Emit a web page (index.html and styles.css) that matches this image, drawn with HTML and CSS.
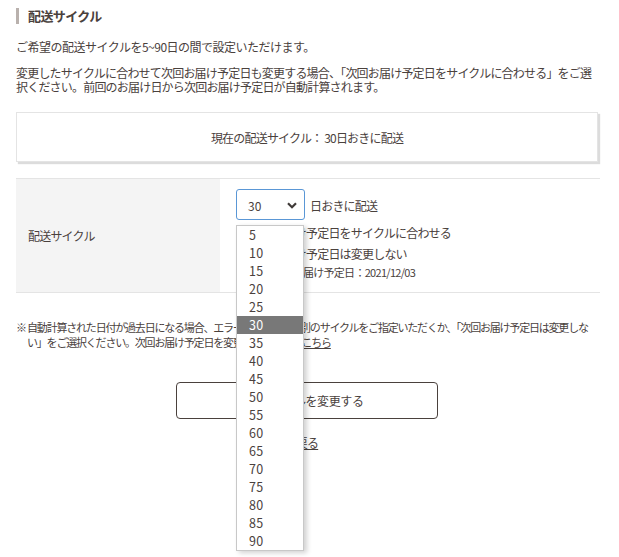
FILE: index.html
```html
<!DOCTYPE html>
<html lang="ja">
<head>
<meta charset="utf-8">
<title>配送サイクル</title>
<link rel="stylesheet" href="styles.css">
</head>
<body>
<div class="page">
  <h2 class="heading">配送サイクル</h2>
  <p class="lead">ご希望の配送サイクルを5~90日の間で設定いただけます。</p>
  <p class="desc">変更したサイクルに合わせて次回お届け予定日も変更する場合、「次回お届け予定日をサイクルに合わせる」をご選択ください。前回のお届け日から次回お届け予定日が自動計算されます。</p>

  <div class="current">現在の配送サイクル： 30日おきに配送</div>

  <div class="form-row">
    <div class="label-cell">配送サイクル</div>
    <div class="value-cell">
      <div class="select-line">
        <div class="select-wrap">
          <div class="select-box">
            <span class="select-value">30</span>
            <svg class="chevron" width="10" height="7" viewBox="0 0 10 7"><path d="M1 1.2 L5 5.2 L9 1.2" fill="none" stroke="#3f3a38" stroke-width="2.2"/></svg>
          </div>
          <ul class="dropdown">
            <li>5</li><li>10</li><li>15</li><li>20</li><li>25</li>
            <li class="selected">30</li><li>35</li><li>40</li><li>45</li><li>50</li>
            <li>55</li><li>60</li><li>65</li><li>70</li><li>75</li>
            <li>80</li><li>85</li><li>90</li>
          </ul>
        </div>
        <span class="unit">日おきに配送</span>
      </div>
      <div class="radio-line"><span class="radio"></span>次回お届け予定日をサイクルに合わせる</div>
      <div class="radio-line"><span class="radio checked"></span>次回お届け予定日は変更しない</div>
      <div class="sub-line">次回お届け予定日：2021/12/03</div>
    </div>
  </div>

  <p class="note">※ 自動計算された日付が過去日になる場合、エラーとなります。別のサイクルをご指定いただくか、「次回お届け予定日は変更しない」をご選択ください。次回お届け予定日を変更したい場合は<a href="#" class="inline-link">こちら</a></p>

  <div class="actions">
    <button class="submit" type="button">配送サイクルを変更する</button>
    <a href="#" class="back">戻る</a>
  </div>
</div>
</body>
</html>
```

FILE: styles.css
```css
* { box-sizing: border-box; }
html, body { margin: 0; padding: 0; background: #fff; }
body {
  font-family: "Noto Sans CJK JP", "Noto Sans", sans-serif;
  color: #4a413d;
  font-size: 12px;
  letter-spacing: -0.8px;
  min-height: 557px;
}
.page {
  width: 600px;
  min-height: 557px;
  padding: 8px 0 0 16px;
}
.heading {
  margin: 0;
  height: 16px;
  line-height: 16px;
  font-size: 13px;
  font-weight: bold;
  letter-spacing: -0.6px;
  border-left: 3px solid #b9b1ad;
  padding-left: 9px;
  color: #4a413d;
}
.lead {
  margin: 16px 0 0;
  line-height: 14px;
  letter-spacing: -0.5px;
}
.desc {
  margin: 12px 0 0;
  line-height: 14px;
  width: 584px;
}
.current {
  margin-top: 18px;
  width: 582px;
  height: 50px;
  border: 1px solid #e4e4e4;
  box-shadow: 2px 2px 1px #dcdcdc;
  display: flex;
  align-items: center;
  justify-content: center;
  padding-top: 1px;
}
.form-row {
  margin-top: 16px;
  width: 584px;
  display: flex;
  border-top: 1px solid #e4e4e4;
  border-bottom: 1px solid #e4e4e4;
  height: 115px;
}
.label-cell {
  width: 204px;
  background: #f4f4f4;
  display: flex;
  align-items: center;
  padding-left: 12px;
}
.value-cell {
  flex: 1;
  padding: 10px 0 0 16px;
}
.select-line {
  display: flex;
  align-items: center;
  gap: 5px;
}
.select-wrap { position: relative; }
.select-box {
  width: 69px;
  height: 31px;
  border: 1px solid #5a97d6;
  border-radius: 3px;
  display: flex;
  align-items: center;
  justify-content: space-between;
  padding: 1px 7px 0 11px;
  background: #fff;
}
.select-value { letter-spacing: 0; }
.chevron { display: block; }
.unit { padding-top: 2px; }
.dropdown {
  position: absolute;
  left: 0;
  top: 36px;
  width: 68px;
  margin: 0;
  padding: 0;
  list-style: none;
  background: #fff;
  border: 1px solid #c8c8c8;
  box-shadow: 3px 2px 5px rgba(0,0,0,0.18);
  z-index: 10;
}
.dropdown li {
  height: 18px;
  line-height: 17px;
  padding-left: 12px;
  font-size: 12.5px;
  letter-spacing: 0.2px;
  color: #4a413d;
}
.dropdown li.selected {
  background: #787878;
  color: #fff;
}
.radio-line {
  display: flex;
  align-items: center;
  gap: 1px;
  height: 21px;
  line-height: 21px;
  margin-top: 2px;
}
.radio-line + .radio-line { margin-top: 0; }
.radio {
  width: 13px;
  height: 13px;
  border: 1px solid #999;
  border-radius: 50%;
  background: #fff;
}
.radio.checked { border: 4px solid #4a90d9; }
.sub-line {
  font-size: 11px;
  letter-spacing: -0.7px;
  line-height: 16px;
  padding-left: 36px;
}
.note {
  margin: 27px 0 0;
  width: 584px;
  font-size: 11px;
  letter-spacing: -1.2px;
  line-height: 15px;
  padding-left: 11px;
  text-indent: -11px;
  color: #4a413d;
}
.inline-link { color: #4a413d; }
.actions {
  display: flex;
  flex-direction: column;
  align-items: center;
  width: 584px;
  padding-right: 2px;
}
.submit {
  margin-top: 32px;
  width: 262px;
  height: 37px;
  border: 1px solid #4a413d;
  border-radius: 4px;
  background: #fff;
  font-family: inherit;
  font-size: 12px;
  letter-spacing: -0.4px;
  color: #4a413d;
  padding: 0 14px 0 0;
}
.back {
  margin-top: 17px;
  color: #4a413d;
  line-height: 14px;
}
```
